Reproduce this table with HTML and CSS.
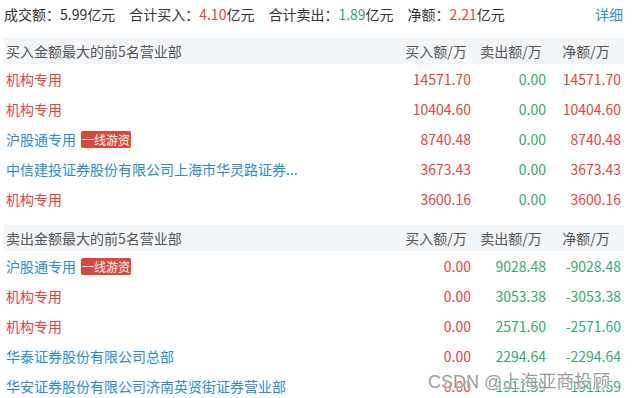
FILE: index.html
```html
<!DOCTYPE html>
<html lang="zh">
<head>
<meta charset="utf-8">
<link rel="stylesheet" href="styles.css">
</head>
<body>
<div class="page">
  <div class="summary">
    <span class="item">成交额：<span class="val">5.99</span>亿元</span>
    <span class="item">合计买入：<span class="val red">4.10</span>亿元</span>
    <span class="item">合计卖出：<span class="val green">1.89</span>亿元</span>
    <span class="item">净额：<span class="val red">2.21</span>亿元</span>
    <span class="detail">详细</span>
  </div>

  <div class="section">
    <div class="row head">
      <div class="name">买入金额最大的前5名营业部</div>
      <div class="num">买入额/万</div>
      <div class="num">卖出额/万</div>
      <div class="num">净额/万</div>
    </div>
    <div class="row">
      <div class="name red">机构专用</div>
      <div class="num red">14571.70</div>
      <div class="num green">0.00</div>
      <div class="num red">14571.70</div>
    </div>
    <div class="row">
      <div class="name red">机构专用</div>
      <div class="num red">10404.60</div>
      <div class="num green">0.00</div>
      <div class="num red">10404.60</div>
    </div>
    <div class="row">
      <div class="name blue">沪股通专用<span class="badge">一线游资</span></div>
      <div class="num red">8740.48</div>
      <div class="num green">0.00</div>
      <div class="num red">8740.48</div>
    </div>
    <div class="row">
      <div class="name blue">中信建投证券股份有限公司上海市华灵路证券...</div>
      <div class="num red">3673.43</div>
      <div class="num green">0.00</div>
      <div class="num red">3673.43</div>
    </div>
    <div class="row">
      <div class="name red">机构专用</div>
      <div class="num red">3600.16</div>
      <div class="num green">0.00</div>
      <div class="num red">3600.16</div>
    </div>
  </div>

  <div class="section second">
    <div class="row head">
      <div class="name">卖出金额最大的前5名营业部</div>
      <div class="num">买入额/万</div>
      <div class="num">卖出额/万</div>
      <div class="num">净额/万</div>
    </div>
    <div class="row">
      <div class="name blue">沪股通专用<span class="badge">一线游资</span></div>
      <div class="num red">0.00</div>
      <div class="num green">9028.48</div>
      <div class="num green">-9028.48</div>
    </div>
    <div class="row">
      <div class="name red">机构专用</div>
      <div class="num red">0.00</div>
      <div class="num green">3053.38</div>
      <div class="num green">-3053.38</div>
    </div>
    <div class="row">
      <div class="name red">机构专用</div>
      <div class="num red">0.00</div>
      <div class="num green">2571.60</div>
      <div class="num green">-2571.60</div>
    </div>
    <div class="row">
      <div class="name blue">华泰证券股份有限公司总部</div>
      <div class="num red">0.00</div>
      <div class="num green">2294.64</div>
      <div class="num green">-2294.64</div>
    </div>
    <div class="row">
      <div class="name blue">华安证券股份有限公司济南英贤街证券营业部</div>
      <div class="num red">0.00</div>
      <div class="num green">1911.59</div>
      <div class="num green">-1911.59</div>
    </div>
  </div>

  <div class="watermark">CSDN @上海亚商投顾</div>
</div>
</body>
</html>
```

FILE: styles.css
```css
html, body {
  margin: 0;
  padding: 0;
  background: #ffffff;
}
body {
  font-family: "Noto Sans CJK SC", "Noto Sans", sans-serif;
  font-size: 14px;
  color: #333333;
  overflow: hidden;
}
.page {
  position: relative;
  width: 620px;
  height: 398px;
  margin-left: 4px;
}
.summary {
  display: flex;
  align-items: center;
  height: 28px;
  line-height: 28px;
  white-space: nowrap;
}
.summary .item {
  margin-right: 14px;
}
.summary .detail {
  margin-left: auto;
  color: #2f8fd6;
  margin-right: 1px;
}
.section {
  margin-top: 10px;
}
.section.second {
  margin-top: 11px;
}
.row {
  display: flex;
  align-items: center;
  height: 30px;
  padding: 0 3px 0 2px;
  white-space: nowrap;
}
.row.head {
  height: 26px;
  background: #f3f6f9;
  color: #555555;
}
.name {
  flex: 1;
  display: flex;
  align-items: center;
  overflow: hidden;
}
.num {
  width: 75px;
  text-align: right;
}
.row.head .num {
  text-align: center;
  padding-left: 5px;
  box-sizing: border-box;
}
.red { color: #e5453a; }
.green { color: #36a874; }
.blue { color: #2a8bd0; }
.badge {
  display: inline-block;
  margin-left: 5px;
  padding: 0 1px;
  height: 17px;
  line-height: 17px;
  font-size: 12px;
  color: #ffffff;
  background: #d8493b;
  border-radius: 2px;
}
.watermark {
  position: absolute;
  left: 424px;
  top: 367px;
  font-family: "Liberation Sans", "Noto Sans CJK SC", sans-serif;
  font-size: 18px;
  color: rgba(120, 120, 120, 0.75);
  text-shadow: 0 0 2px #ffffff, 0 0 2px #ffffff;
  white-space: nowrap;
}
```
